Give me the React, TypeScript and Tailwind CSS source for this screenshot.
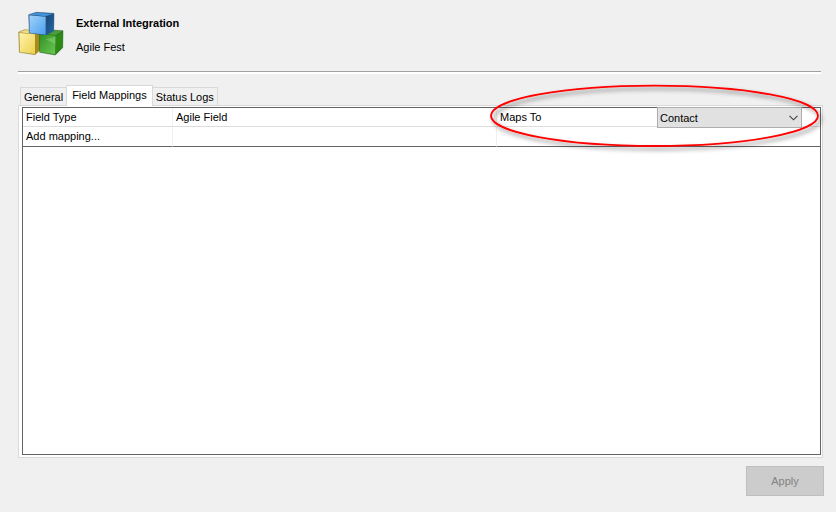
import React, { useState } from "react";

const tabs = ["General", "Field Mappings", "Status Logs"];

const CubesLogo: React.FC = () => (
  <svg viewBox="24 18 141 135" className="h-[45px] w-[47px] shrink-0" aria-hidden="true">
    <defs>
      <linearGradient id="blueFront" x1="0" y1="0" x2="1" y2="1">
        <stop offset="0" stopColor="#a3d3f8" />
        <stop offset="1" stopColor="#4a9ff0" />
      </linearGradient>
      <linearGradient id="blueSide" x1="0" y1="0" x2="1" y2="1">
        <stop offset="0" stopColor="#1b4674" />
        <stop offset="1" stopColor="#2368a6" />
      </linearGradient>
      <linearGradient id="yellowFront" x1="0" y1="0" x2="1" y2="1">
        <stop offset="0" stopColor="#fff3ae" />
        <stop offset="1" stopColor="#ecd14c" />
      </linearGradient>
      <linearGradient id="greenFront" x1="0" y1="0" x2="1" y2="1">
        <stop offset="0" stopColor="#2f8f22" />
        <stop offset="1" stopColor="#6cc955" />
      </linearGradient>
    </defs>
    {/* Yellow cube */}
    <path d="M26 81 L44 74 L92 78 L92 133 L75 149 L28 142 Z" fill="#a08a35" stroke="#a08a35" strokeWidth="1.5" strokeLinejoin="round" />
    <path d="M27 82 L45 75 L90 80 L75 87 Z" fill="#f0dc84" />
    <path d="M28 84 L75 88 L75 147 L30 141 Z" fill="url(#yellowFront)" />
    <path d="M76 88 L91 81 L91 133 L76 147 Z" fill="#a98b1d" />
    {/* Green cube */}
    <path d="M88 84 L106 74 L159 77 L158 128 L136 150 L89 142 Z" fill="#1f7014" stroke="#35752b" strokeWidth="1.5" strokeLinejoin="round" />
    <path d="M89 85 L107 76 L158 78 L137 91 Z" fill="#4a9c3c" />
    <path d="M89 87 L137 92 L136 148 L90 141 Z" fill="url(#greenFront)" />
    <path d="M107 103 L136 118 L136 96 Z" fill="#8bd676" opacity="0.5" />
    <path d="M138 92 L158 80 L157 127 L137 147 Z" fill="#2c8a16" />
    {/* Blue cube */}
    <path d="M56 29 L79 22 L132 25 L131 78 L107 90 L58 84 Z" fill="#1b466f" stroke="#2f669b" strokeWidth="1.5" strokeLinejoin="round" />
    <path d="M58 29 L79 23 L131 26 L107 34 Z" fill="#4491d8" />
    <path d="M58 31 L107 35 L107 89 L59 83 Z" fill="url(#blueFront)" />
    <path d="M108 35 L131 27 L130 77 L108 89 Z" fill="url(#blueSide)" />
  </svg>
);

const App: React.FC = () => {
  const [activeTab, setActiveTab] = useState<string>("Field Mappings");
  const [mapsTo, setMapsTo] = useState<string>("Contact");

  return (
    <div className="flex min-h-screen flex-col overflow-x-hidden bg-[#f0f0f0] pt-[11px] pr-3 pb-4 pl-[18px] font-['Liberation_Sans',Arial,sans-serif] text-[11px] leading-4 text-black">
      <header className="mr-[3px] border-b border-[#a0a0a0] pb-[15px]">
        <div className="flex gap-[11px]">
          <CubesLogo />
          <div className="flex flex-col gap-2 pt-1">
            <h1 className="font-bold">External Integration</h1>
            <p>Agile Fest</p>
          </div>
        </div>
      </header>
      <div className="mr-[3px] h-0.5 bg-white" />

      {/* Tabs */}
      <div role="tablist" className="mt-[11px] flex items-end pl-0.5">
        {tabs.map((tab) => (
          <button
            key={tab}
            type="button"
            role="tab"
            aria-selected={tab === activeTab}
            onClick={() => setActiveTab(tab)}
            className={
              tab === activeTab
                ? "relative z-10 -mx-px -mb-px h-[21px] border border-b-0 border-[#d9d9d9] bg-white px-[5px] pb-0.5"
                : "h-[18px] border border-b-0 border-[#d9d9d9] px-[3px]"
            }
          >
            {tab}
          </button>
        ))}
      </div>

      {/* Tab panel */}
      <main role="tabpanel" className="mr-px flex flex-1 flex-col border border-[#d9d9d9] bg-white pt-px pr-px pb-0.5 pl-[3px]">
        <div className="relative flex-1 border border-[#646464]">
          <table className="w-full table-fixed border-separate border-spacing-0 text-left">
            <colgroup>
              <col className="w-[150px]" />
              <col className="w-[324px]" />
              <col />
            </colgroup>
            <thead>
              <tr className="h-[19px]">
                <th className="border-r border-b border-r-[#f0f0f0] border-b-[#dcdcdc] px-[3px] font-normal">Field Type</th>
                <th className="border-r border-b border-r-[#f0f0f0] border-b-[#dcdcdc] px-[3px] font-normal">Agile Field</th>
                <th className="relative border-b border-b-[#dcdcdc] px-[3px] font-normal">
                  <label htmlFor="maps-to">Maps To</label>
                  <div className="absolute -top-px right-[18px]">
                    <select
                      id="maps-to"
                      value={mapsTo}
                      onChange={(e) => setMapsTo(e.target.value)}
                      className="block h-[21px] w-[145px] appearance-none border border-[#adadad] bg-[#e1e1e1] pl-0.5"
                    >
                      <option>Contact</option>
                    </select>
                    <svg viewBox="0 0 9 6" className="pointer-events-none absolute top-2 right-1 h-1.5 w-[9px]" aria-hidden="true">
                      <path d="M0.5 0.8 L4.5 4.8 L8.5 0.8" fill="none" stroke="#404040" strokeWidth="1.1" />
                    </svg>
                  </div>
                </th>
              </tr>
            </thead>
            <tbody>
              <tr className="h-5">
                <td className="border-r border-b border-r-[#f0f0f0] border-b-[#646464] px-[3px] pb-0.5">Add mapping...</td>
                <td className="border-r border-b border-r-[#f0f0f0] border-b-[#646464] px-[3px]" />
                <td className="border-b border-b-[#646464] px-[3px]" />
              </tr>
            </tbody>
          </table>

          {/* Callout around the target picker */}
          <svg viewBox="0 0 350 76" className="pointer-events-none absolute -top-7 -right-3.5 z-20 h-[76px] w-[350px]" aria-hidden="true">
            <defs>
              <filter id="calloutShadow" x="-5%" y="-20%" width="110%" height="150%">
                <feDropShadow dx="2.5" dy="3" stdDeviation="2" floodColor="#000" floodOpacity="0.5" />
              </filter>
            </defs>
            <ellipse cx="170.5" cy="35.8" rx="163.5" ry="30.2" fill="none" stroke="#ff0000" strokeWidth="1.8" filter="url(#calloutShadow)" />
          </svg>
        </div>
      </main>

      <button
        type="button"
        disabled
        className="mt-2 h-[30px] w-[78px] self-end border border-[#bfbfbf] bg-[#cccccc] text-[#838383]"
      >
        Apply
      </button>
    </div>
  );
};

export default App;
